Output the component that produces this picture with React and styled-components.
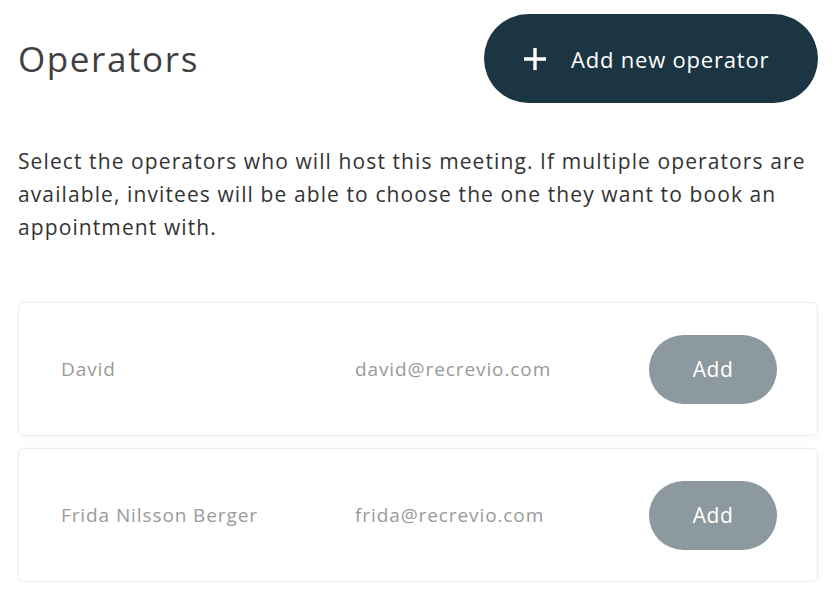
import React from 'react';
import styled, { createGlobalStyle } from 'styled-components';

const GlobalStyle = createGlobalStyle`
  html, body {
    margin: 0;
    padding: 0;
    background: #fff;
  }
  body {
    font-family: 'Open Sans', 'Noto Sans', sans-serif;
    -webkit-font-smoothing: antialiased;
  }
`;

const Page = styled.div`
  padding: 14px 16px 0 18px;
`;

const Header = styled.div`
  display: flex;
  align-items: center;
  justify-content: space-between;
`;

const Title = styled.h1`
  margin: 0;
  font-size: 35px;
  font-weight: 400;
  color: #404040;
  letter-spacing: 1.6px;
`;

const PrimaryButton = styled.button`
  display: flex;
  align-items: center;
  gap: 24px;
  height: 89px;
  width: 334px;
  padding: 0 0 0 39px;
  border: none;
  border-radius: 45px;
  background: #1b3542;
  color: #fff;
  font-family: inherit;
  font-size: 22px;
  font-weight: 400;
  letter-spacing: 0.8px;
  cursor: pointer;
`;

const Intro = styled.p`
  margin: 42px 0 0;
  font-size: 21px;
  line-height: 33px;
  color: #333;
  letter-spacing: 1.1px;
`;

const List = styled.div`
  display: flex;
  flex-direction: column;
  gap: 12px;
  margin-top: 58px;
`;

const Card = styled.div`
  display: grid;
  grid-template-columns: 294px 1fr auto;
  align-items: center;
  height: 134px;
  box-sizing: border-box;
  padding: 0 40px 0 42px;
  border: 1px solid #ececec;
  border-radius: 6px;
  background: #fff;
  box-shadow: 0 2px 10px rgba(0, 0, 0, 0.03);
`;

const Cell = styled.div`
  font-size: 19px;
  color: #9a9a9a;
  letter-spacing: 0.9px;
`;

const AddButton = styled.button`
  width: 128px;
  height: 69px;
  border: none;
  border-radius: 35px;
  background: #8c999e;
  color: #fff;
  font-family: inherit;
  font-size: 21px;
  letter-spacing: 0.5px;
  cursor: pointer;
`;

const PlusIcon = () => (
  <svg width="24" height="24" viewBox="0 0 24 24" fill="none">
    <path d="M12 1v22M1 12h22" stroke="#fff" strokeWidth="3.4" />
  </svg>
);

const operators = [
  { name: 'David', email: 'david@recrevio.com' },
  { name: 'Frida Nilsson Berger', email: 'frida@recrevio.com' },
];

export default function App() {
  return (
    <Page>
      <GlobalStyle />
      <Header>
        <Title>Operators</Title>
        <PrimaryButton>
          <PlusIcon />
          Add new operator
        </PrimaryButton>
      </Header>
      <Intro>
        Select the operators who will host this meeting. If multiple operators are
        available, invitees will be able to choose the one they want to book an
        appointment with.
      </Intro>
      <List>
        {operators.map((op) => (
          <Card key={op.email}>
            <Cell>{op.name}</Cell>
            <Cell>{op.email}</Cell>
            <AddButton>Add</AddButton>
          </Card>
        ))}
      </List>
    </Page>
  );
}
